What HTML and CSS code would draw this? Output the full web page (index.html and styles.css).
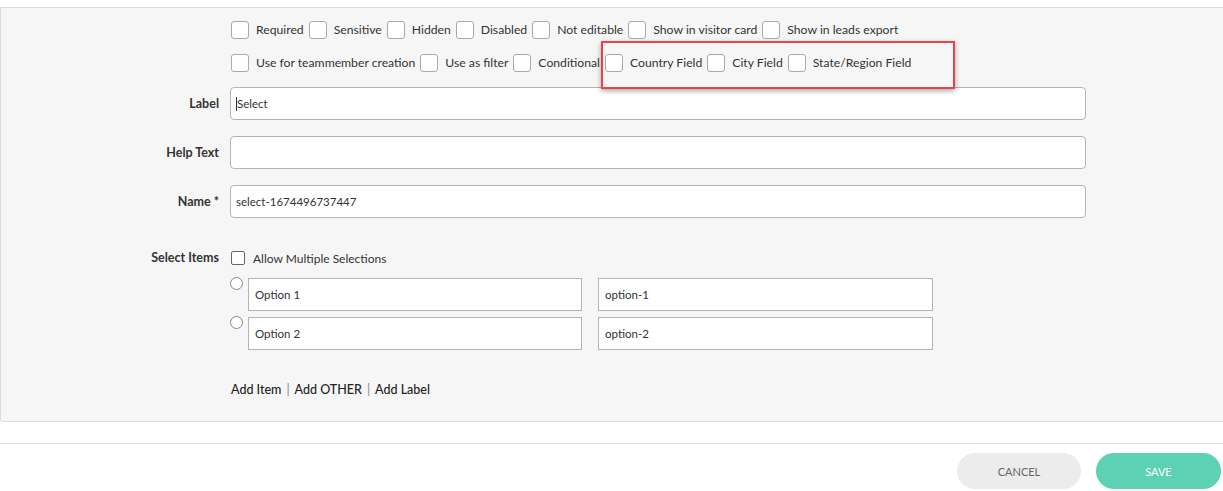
FILE: index.html
```html
<!DOCTYPE html>
<html>
<head>
<meta charset="utf-8">
<link rel="stylesheet" href="styles.css">
</head>
<body>
<div class="panel">
  <div class="flags">
    <div class="flag-row">
      <span class="cb"></span><span class="cb-text">Required</span>
      <span class="cb"></span><span class="cb-text">Sensitive</span>
      <span class="cb"></span><span class="cb-text">Hidden</span>
      <span class="cb"></span><span class="cb-text">Disabled</span>
      <span class="cb"></span><span class="cb-text">Not editable</span>
      <span class="cb"></span><span class="cb-text">Show in visitor card</span>
      <span class="cb"></span><span class="cb-text">Show in leads export</span>
    </div>
    <div class="flag-row">
      <span class="cb"></span><span class="cb-text">Use for teammember creation</span>
      <span class="cb"></span><span class="cb-text">Use as filter</span>
      <span class="cb"></span><span class="cb-text">Conditional</span>
      <span class="cb"></span><span class="cb-text">Country Field</span>
      <span class="cb"></span><span class="cb-text">City Field</span>
      <span class="cb"></span><span class="cb-text">State/Region Field</span>
    </div>
    <div class="highlight"></div>
  </div>

  <div class="field-row">
    <label class="field-label">Label</label>
    <div class="input rounded"><span class="caret"></span>Select</div>
  </div>
  <div class="field-row">
    <label class="field-label">Help Text</label>
    <div class="input rounded"></div>
  </div>
  <div class="field-row">
    <label class="field-label">Name *</label>
    <div class="input rounded">select-1674496737447</div>
  </div>

  <div class="items-row">
    <label class="field-label">Select Items</label>
    <div class="items">
      <div class="multi"><span class="cb small"></span><span class="multi-text">Allow Multiple Selections</span></div>
      <div class="option">
        <span class="radio"></span>
        <div class="input square opt">Option 1</div>
        <div class="input square val">option-1</div>
      </div>
      <div class="option">
        <span class="radio"></span>
        <div class="input square opt">Option 2</div>
        <div class="input square val">option-2</div>
      </div>
      <div class="links">
        <a class="link">Add Item</a><span class="sep">|</span><a class="link">Add OTHER</a><span class="sep">|</span><a class="link">Add Label</a>
      </div>
    </div>
  </div>
</div>
<div class="footer">
  <button class="btn cancel">CANCEL</button>
  <button class="btn save">SAVE</button>
</div>
</body>
</html>
```

FILE: styles.css
```css
html, body {
  margin: 0;
  padding: 0;
  background: #fff;
}
body {
  font-family: Lato, "Liberation Sans", sans-serif;
  font-size: 12px;
  color: #333;
  overflow: hidden;
}
.panel {
  margin-top: 7px;
  height: 413px;
  background: #f6f6f6;
  border: 1px solid #dcdcdc;
  border-right: none;
  border-radius: 0 0 0 3px;
  position: relative;
}
.flags {
  padding: 13px 0 0 230px;
}
.flag-row {
  display: flex;
  align-items: center;
  height: 17px;
  margin-bottom: 16px;
}
.cb {
  display: inline-block;
  width: 16px;
  height: 16px;
  border: 1px solid #a9a9a9;
  border-radius: 3px;
  background: #fff;
  flex: none;
}
.cb-text {
  margin: 0 5px 0 7px;
  font-size: 12.2px;
  line-height: 17px;
  color: #333;
}
.highlight {
  position: absolute;
  left: 600px;
  top: 33px;
  width: 350px;
  height: 44px;
  border: 2px solid #e8434a;
  box-shadow: 0 2px 5px rgba(0, 0, 0, 0.35);
}
.field-row {
  display: flex;
  align-items: center;
  margin-bottom: 16px;
}
.field-row + .field-row + .field-row {
  margin-top: 1px;
}
.field-label {
  width: 218px;
  text-align: right;
  font-weight: bold;
  font-size: 12.5px;
  color: #333;
  flex: none;
}
.input {
  box-sizing: border-box;
  height: 33px;
  background: #fff;
  border: 1px solid #b4b4b4;
  display: flex;
  align-items: center;
  padding-left: 5px;
  font-size: 11.5px;
  color: #333;
}
.rounded {
  width: 856px;
  margin-left: 11px;
  border-radius: 4px;
}
.caret {
  display: inline-block;
  width: 1px;
  height: 14px;
  background: #333;
}
.items-row {
  display: flex;
  align-items: flex-start;
  margin-top: 32px;
}
.items-row .field-label {
  line-height: 16px;
}
.items {
  margin-left: 11px;
}
.multi {
  display: flex;
  align-items: center;
  height: 16px;
  margin-left: 1px;
}
.cb.small {
  width: 12px;
  height: 12px;
  border-radius: 2px;
  border-color: #666;
}
.multi-text {
  margin-left: 8px;
  font-size: 12px;
}
.option {
  display: flex;
  align-items: flex-start;
  margin-top: 12px;
}
.option + .option {
  margin-top: 6px;
}
.radio {
  width: 11px;
  height: 11px;
  border: 1px solid #888;
  border-radius: 50%;
  background: #fff;
  margin-top: -1px;
  flex: none;
}
.square {
  border-radius: 0;
  padding-left: 6px;
}
.opt {
  width: 334px;
  margin-left: 5px;
}
.val {
  width: 335px;
  margin-left: 16px;
}
.links {
  margin-top: 32px;
  margin-left: 1px;
  font-size: 12.5px;
  color: #222;
  font-weight: 500;
}
.link {
  color: #222;
}
.sep {
  color: #8a8aa0;
  margin: 0 5px;
}
.footer {
  margin-top: 21px;
  border-top: 1px solid #dcdcdc;
  padding-top: 9px;
  display: flex;
  justify-content: flex-end;
  gap: 15px;
  padding-right: 2px;
}
.btn {
  height: 36px;
  border: none;
  border-radius: 18px;
  font-family: Lato, "Liberation Sans", sans-serif;
  font-size: 11px;
  padding: 0;
  cursor: pointer;
}
.cancel {
  width: 124px;
  background: #ececec;
  color: #666;
}
.save {
  width: 125px;
  background: #5dd1b4;
  color: #fff;
}
```
